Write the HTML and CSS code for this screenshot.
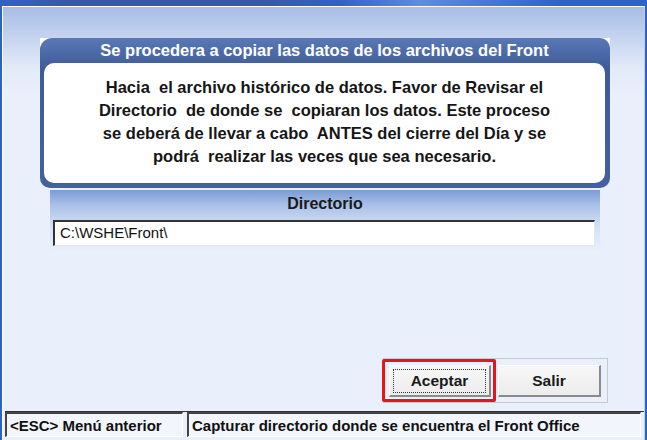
FILE: index.html
```html
<!DOCTYPE html>
<html lang="es">
<head>
  <meta charset="UTF-8">
  <title>Copiar datos del Front</title>
  <link rel="stylesheet" href="styles.css">
</head>
<body>
  <div class="window">
    <div class="titlebar"></div>
    <div class="client">
      <div class="panel-wrap">
        <div class="panel">
          <div class="panel-title">Se procedera a copiar las datos de los archivos del Front</div>
          <div class="panel-body">
            <p>Hacia&nbsp; el archivo histórico de datos. Favor de Revisar el</p>
            <p>Directorio&nbsp; de donde se&nbsp; copiaran los datos. Este proceso</p>
            <p>se deberá de llevar a cabo&nbsp; ANTES del cierre del Día y se</p>
            <p>podrá&nbsp; realizar las veces que sea necesario.</p>
          </div>
        </div>
      </div>

      <div class="dir-band">
        <div class="dir-label">Directorio</div>
        <div class="dir-input">C:\WSHE\Front\</div>
      </div>

      <div class="buttons">
        <div class="btn-focus">
          <button class="btn btn-default"><span>Aceptar</span></button>
        </div>
        <button class="btn btn-exit">Salir</button>
      </div>

      <div class="statusbar">
        <div class="cell cell-left">&lt;ESC&gt; Menú anterior</div>
        <div class="cell cell-right">Capturar directorio donde se encuentra el Front Office</div>
      </div>
    </div>
  </div>
</body>
</html>
```

FILE: styles.css
```css
body {
  margin: 0;
  font-family: "Liberation Sans", Arial, sans-serif;
  background: #2c62c4;
  overflow: hidden;
}
.window {
  height: 440px;
  display: flex;
  flex-direction: column;
  background: #2c62c4;
}
.titlebar {
  height: 6px;
  background: linear-gradient(to right, #2d64c8 0, #3a58a8 60px, #3b58a8 270px, #2f62c6 340px, #5a8ee0 420px, #2d64c8 560px, #2d64c8 100%);
}
.client {
  flex: 1;
  margin-left: 2px;
  margin-right: 2px;
  border-top: 1px solid #fff;
  border-left: 1px solid #fff;
  border-right: 1px solid #c4cedd;
  background: linear-gradient(#a7bde6 0, #c4d3ef 30px, #e2eaf8 60px, #eaf0fb 90px);
  display: flex;
  flex-direction: column;
}

/* Cuadro del mensaje */
.panel-wrap {
  margin: 31px 0 0 37px;
  width: 570px;
  background: linear-gradient(#fff, #fff) top / 100% 8px no-repeat;
}
.panel {
  background: linear-gradient(#5a78b6, #3f5c9a 30px, #44609e);
  border-radius: 12px 10px 10px 10px;
  padding: 0 5px 5px 4px;
}
.panel-title {
  height: 25px;
  line-height: 25px;
  text-align: center;
  color: #fff;
  font-weight: bold;
  font-size: 16.5px;
}
.panel-body {
  background: #fff;
  border-radius: 10px;
  height: 120px;
  box-sizing: border-box;
  padding-top: 13px;
  text-align: center;
  font-weight: bold;
  font-size: 16.5px;
  color: #161616;
}
.panel-body p {
  margin: 0;
  line-height: 23px;
}

/* Directorio */
.dir-band {
  margin: 2px 0 0 47px;
  width: 550px;
  height: 60px;
  background: linear-gradient(#7b9bd5 0, #a9c0e8 15px, #d6e2f6 38px, #e9effa 60px);
}
.dir-label {
  height: 30px;
  line-height: 28px;
  text-align: center;
  font-weight: bold;
  font-size: 16px;
  color: #1a1a1a;
}
.dir-input {
  margin: 0 5px 0 3px;
  height: 26px;
  box-sizing: border-box;
  background: #fff;
  border-top: 2px solid #333;
  border-left: 2px solid #333;
  border-right: 1px solid #e2e6ee;
  border-bottom: 1px solid #e2e6ee;
  font-size: 15px;
  line-height: 22px;
  padding-left: 5px;
  color: #111;
}

/* Botones */
.buttons {
  margin: auto 36px 8px auto;
  display: flex;
  align-items: flex-start;
  gap: 2px;
  border: 1px solid #c9c9c9;
  padding: 0 6px 0 0;
  height: 45px;
  box-sizing: border-box;
}
.btn-focus {
  border: 3px solid #e8141c;
  border-radius: 2px;
  padding: 3px 2px 2px 4px;
  margin-left: -2px;
}
.btn {
  width: 103px;
  height: 32px;
  background: linear-gradient(#f7f7f7, #ececec);
  border-top: 1px solid #fff;
  border-left: 1px solid #fff;
  border-right: 2px solid #8a8a8a;
  border-bottom: 2px solid #8a8a8a;
  font-family: "Liberation Sans", Arial, sans-serif;
  font-weight: bold;
  font-size: 15.5px;
  color: #1a1a1a;
  padding: 0;
}
.btn-default {
  width: 102px;
  display: block;
}
.btn-default span {
  display: block;
  margin: 3px;
  line-height: 22px;
  border: 1px dotted #333;
}
.btn-exit {
  margin-top: 6px;
}

/* Barra de estado */
.statusbar {
  display: flex;
  gap: 4px;
  margin: 0 0 3px 2px;
  border-top: 1px solid #333;
}
.cell {
  height: 25px;
  line-height: 24px;
  box-sizing: border-box;
  border-top: 2px solid #444;
  border-left: 2px solid #444;
  border-right: 1px solid #fff;
  border-bottom: 1px solid #fff;
  background: #f2f5fb;
  font-weight: bold;
  font-size: 15px;
  color: #111;
  padding-left: 3px;
  white-space: nowrap;
}
.cell-left {
  width: 178px;
}
.cell-right {
  flex: 1;
  margin-right: 3px;
}
```
